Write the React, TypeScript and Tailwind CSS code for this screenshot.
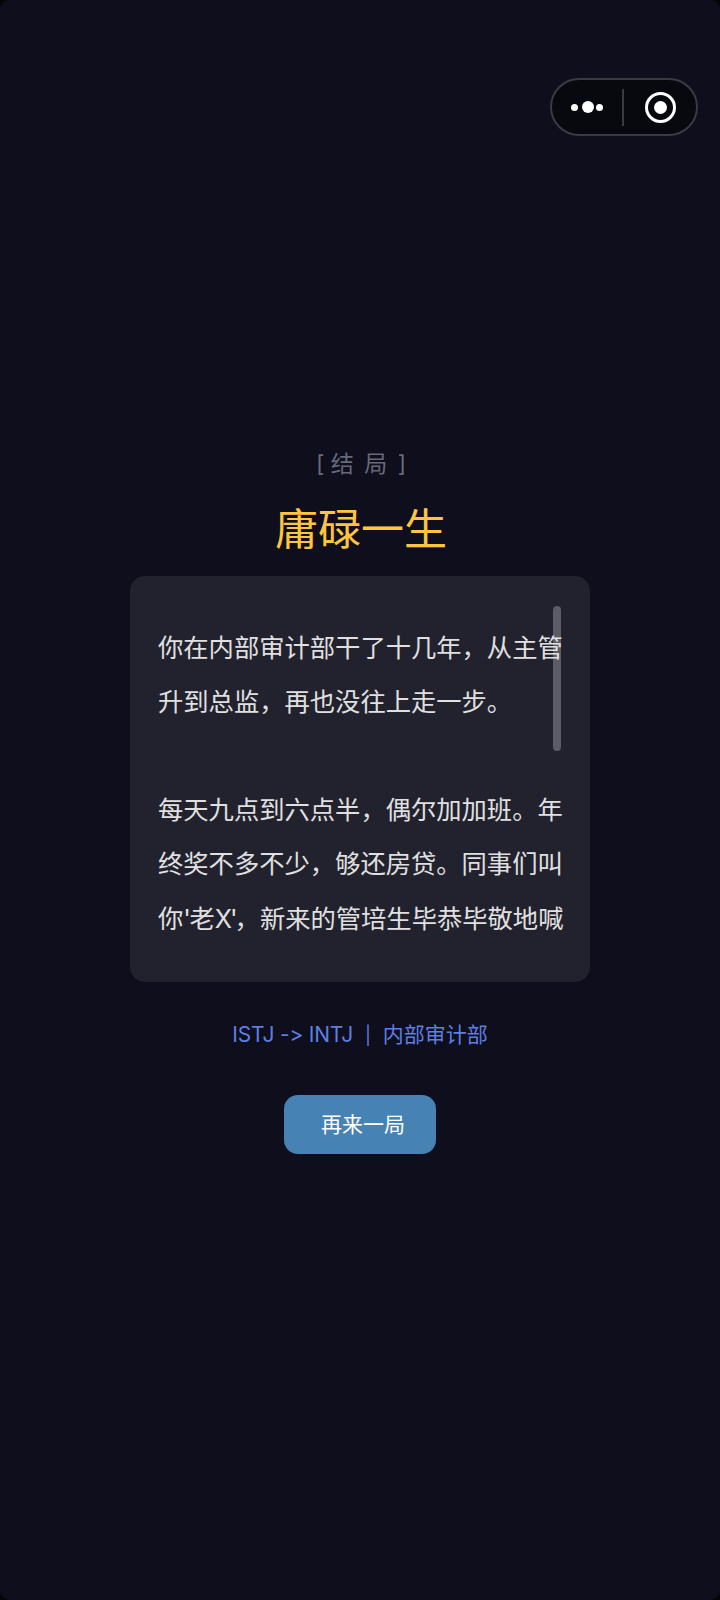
export default function App() {
  return (
    <div className="h-[1600px] w-[720px] bg-[#05050a]">
      <div
        className="relative flex h-[1600px] w-[720px] flex-col items-center justify-center overflow-hidden rounded-[10px] bg-[#0e0e1c] [font-feature-settings:'calt'_0]"
        style={{ fontFamily: '"Inter", "Noto Sans CJK SC", sans-serif' }}
      >
        <div className="absolute left-[550px] top-[78px] flex h-[58px] w-[148px] items-center rounded-full border-2 border-[#3a3a42] bg-[#08080f]">
          <div className="flex w-[70px] items-center justify-center gap-[2px]">
            <span className="mr-[1.5px] h-[7px] w-[7px] rounded-full bg-white" />
            <span className="h-[12px] w-[12px] rounded-full bg-white" />
            <span className="h-[7px] w-[7px] rounded-full bg-white" />
          </div>
          <div className="h-[37px] w-[2px] bg-[#3a3a42]" />
          <div className="flex flex-1 items-center justify-center">
            <div className="flex h-[31px] w-[31px] items-center justify-center rounded-full border-[3px] border-white">
              <span className="h-[13px] w-[13px] rounded-full bg-white" />
            </div>
          </div>
        </div>

        <div className="pl-[4px] text-[23px] leading-[36px] tracking-[2px] text-[#666a78]">
          <span className="tracking-[0px]">[ </span>结 局 ]
        </div>
        <h1 className="mt-[17px] pl-[2px] text-[43px] font-normal leading-[60px] text-[#ffc53d]">庸碌一生</h1>

        <div className="relative mt-[17px] h-[406px] w-[460px] overflow-hidden rounded-[15px] bg-[#22222e] px-[28px] pt-[45px]">
          <div className="absolute left-[423px] top-[30px] h-[145px] w-[8px] rounded-full bg-[#5c5c66]" />
          <div className="relative h-[360px] w-[406px] overflow-hidden text-[25.3px] leading-[54.4px] text-[#e0e0e0]">
            <p>你在内部审计部干了十几年，从主管升到总监，再也没往上走一步。</p>
            <p className="mt-[53px]">
              每天九点到六点半，偶尔加加班。年终奖不多不少，够还房贷。同事们叫你
              <span className="tracking-[-1.5px]">'</span>老<span className="tracking-[-2px]">X</span><span className="tracking-[-3px]">'</span>，新来的管培生毕恭毕敬地喊
            </p>
          </div>
        </div>

        <div className="mt-[37px] text-[21px] leading-[32px] text-[#5f7fe0]">
          <span className="tracking-[-0.2px]">ISTJ -&gt; INTJ</span> &nbsp;<span className="text-[18px]">|</span>&nbsp; 内部审计部
        </div>

        <button className="mt-[43px] h-[59px] w-[152px] rounded-[14px] bg-[#4682b4] pl-[6px] text-[21px] text-white">再来一局</button>
      </div>
    </div>
  );
}
